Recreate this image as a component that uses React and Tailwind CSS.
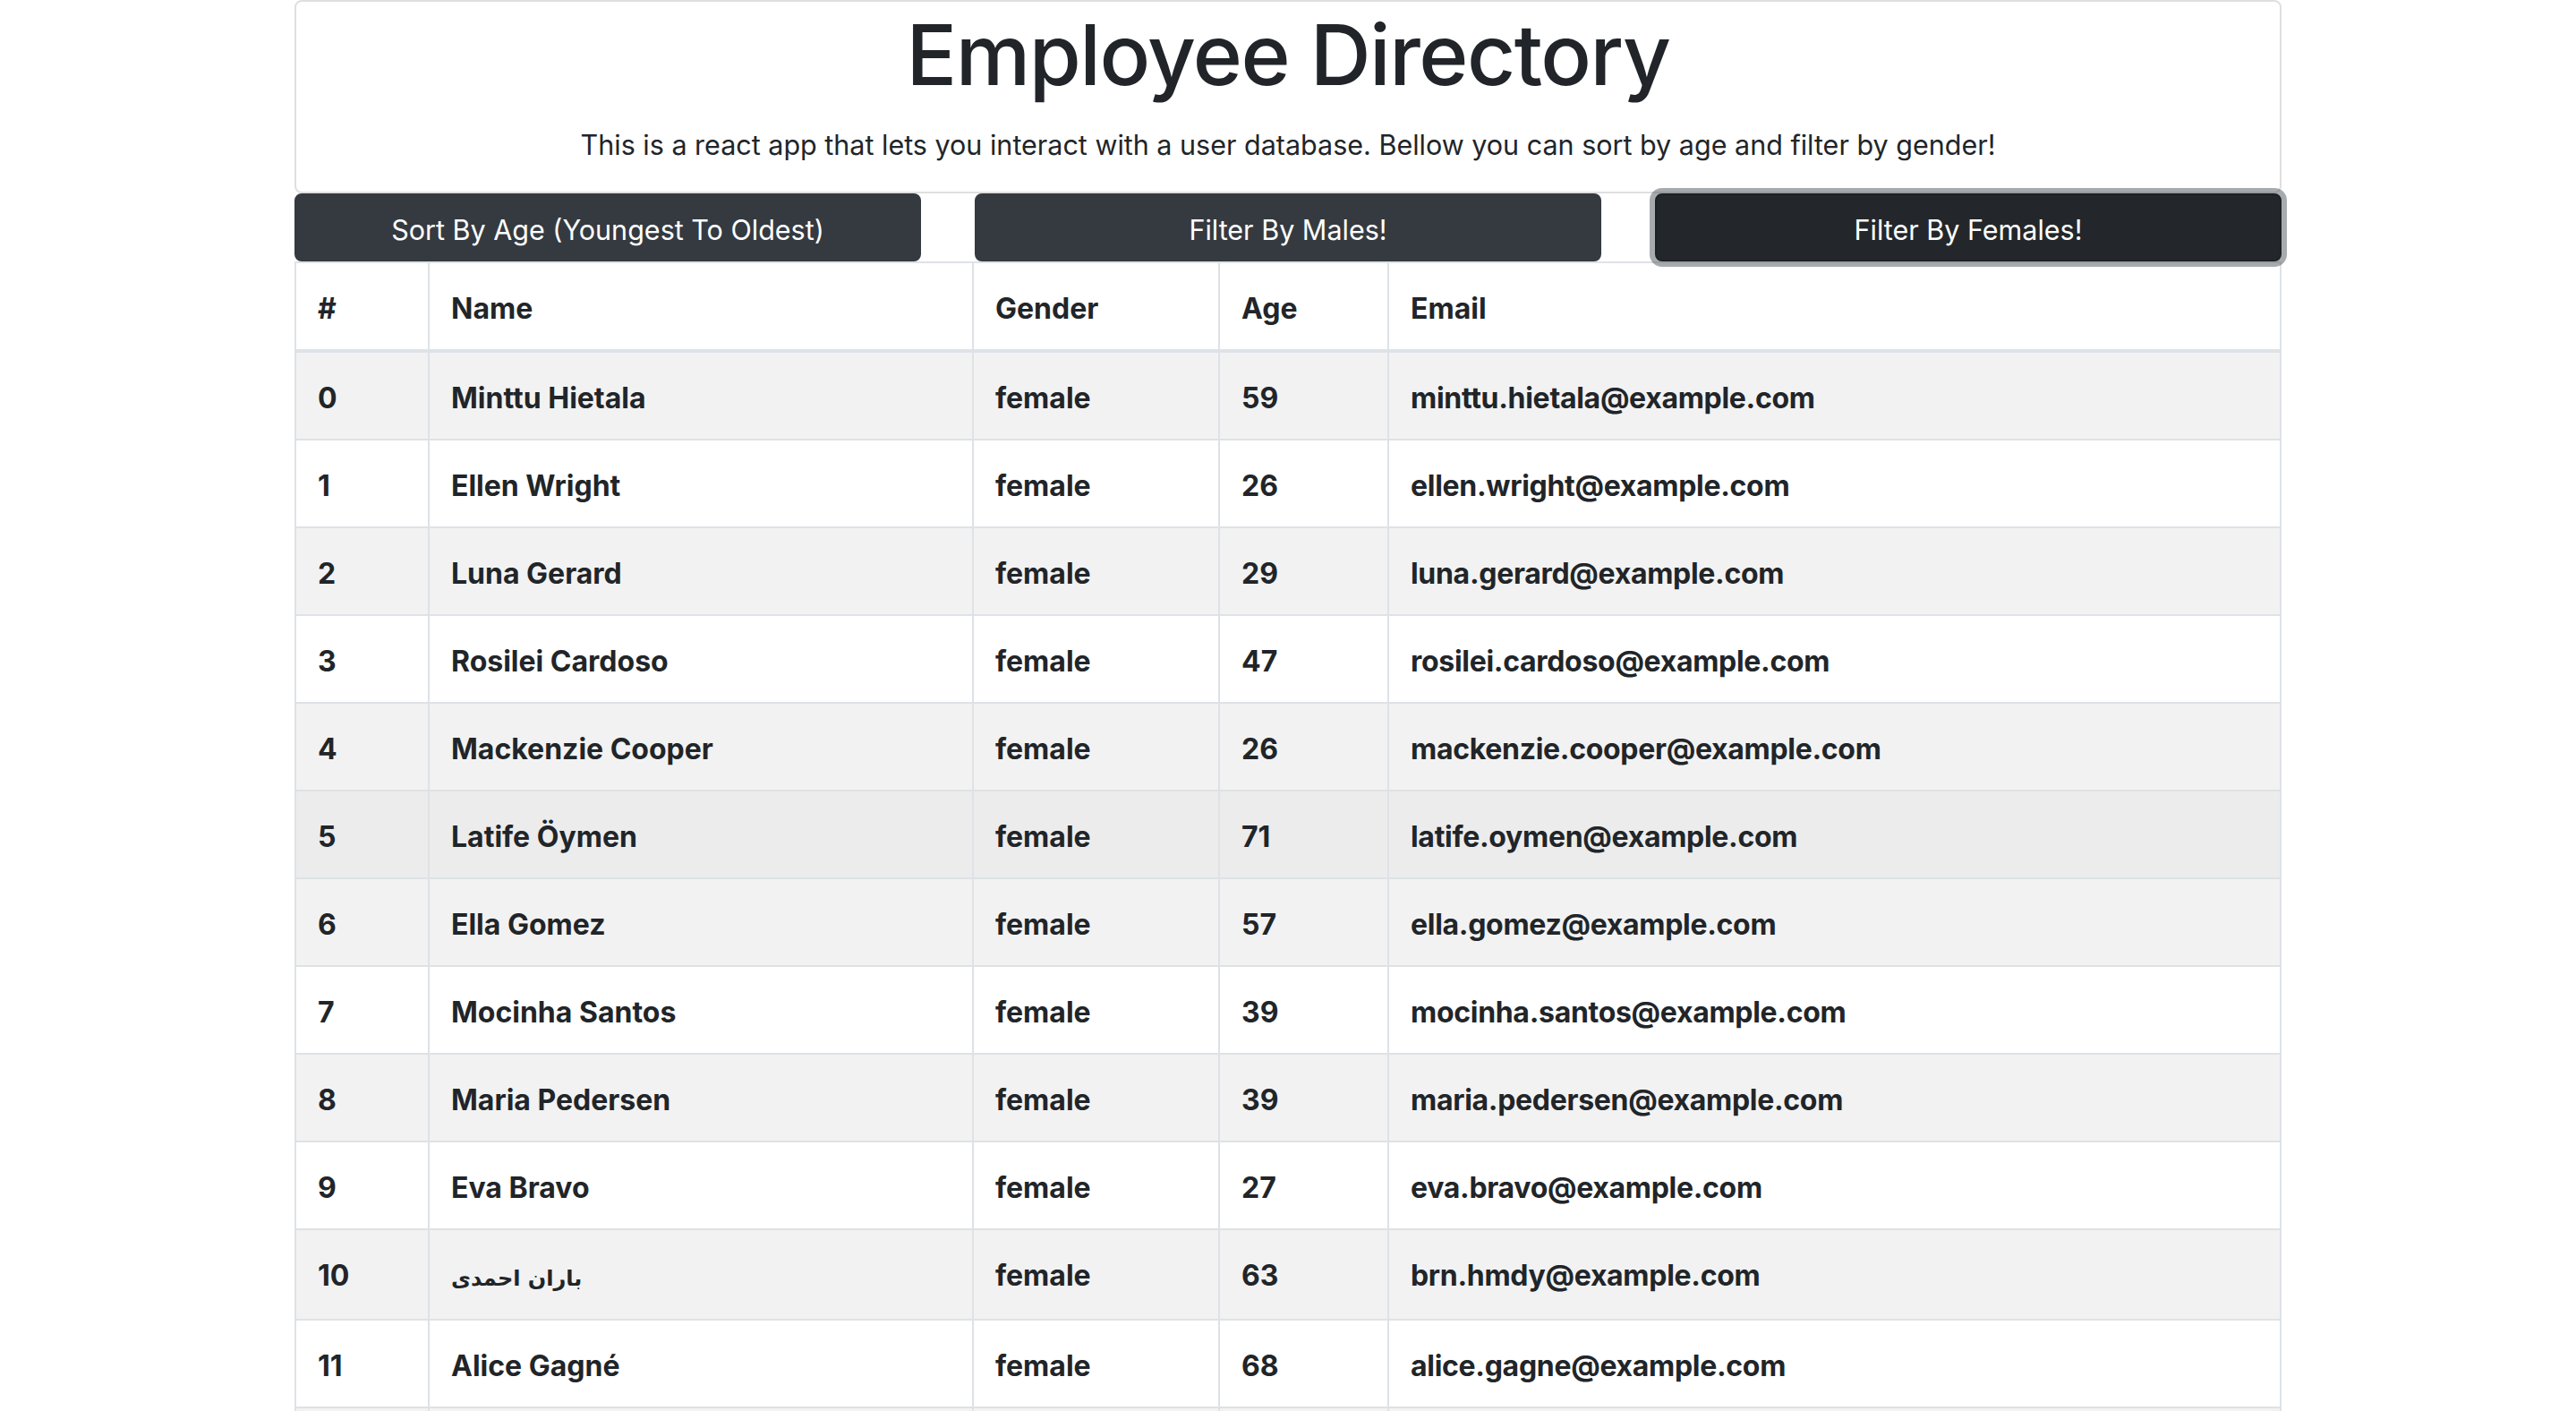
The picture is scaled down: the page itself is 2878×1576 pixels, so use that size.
import React, { useState } from 'react';

const employees = [
  { name: 'Minttu Hietala', gender: 'female', age: 59, email: 'minttu.hietala@example.com' },
  { name: 'Ellen Wright', gender: 'female', age: 26, email: 'ellen.wright@example.com' },
  { name: 'Luna Gerard', gender: 'female', age: 29, email: 'luna.gerard@example.com' },
  { name: 'Rosilei Cardoso', gender: 'female', age: 47, email: 'rosilei.cardoso@example.com' },
  { name: 'Mackenzie Cooper', gender: 'female', age: 26, email: 'mackenzie.cooper@example.com' },
  { name: 'Latife Öymen', gender: 'female', age: 71, email: 'latife.oymen@example.com' },
  { name: 'Ella Gomez', gender: 'female', age: 57, email: 'ella.gomez@example.com' },
  { name: 'Mocinha Santos', gender: 'female', age: 39, email: 'mocinha.santos@example.com' },
  { name: 'Maria Pedersen', gender: 'female', age: 39, email: 'maria.pedersen@example.com' },
  { name: 'Eva Bravo', gender: 'female', age: 27, email: 'eva.bravo@example.com' },
  { name: 'باران احمدی', gender: 'female', age: 63, email: 'brn.hmdy@example.com', rtl: true },
  { name: 'Alice Gagné', gender: 'female', age: 68, email: 'alice.gagne@example.com' },
  { name: 'Nora Lehmann', gender: 'female', age: 44, email: 'nora.lehmann@example.com' },
  { name: 'Sofia Moreno', gender: 'female', age: 35, email: 'sofia.moreno@example.com' },
];

function App() {
  const [active, setActive] = useState('female');
  const [hovered, setHovered] = useState(5);

  const buttons = [
    { key: 'age', label: 'Sort By Age (Youngest To Oldest)' },
    { key: 'male', label: 'Filter By Males!' },
    { key: 'female', label: 'Filter By Females!' },
  ];

  const rowBg = (i) => {
    if (i === hovered) return 'bg-[#ececec]';
    return i % 2 === 0 ? 'bg-[#f2f2f2]' : 'bg-white';
  };

  const cell = 'border-2 border-[#dee2e6] px-[24px] pt-[27px] pb-[21px] leading-[48px] text-left align-top';

  return (
    <div className="min-h-screen bg-white text-[#212529] font-['Inter','Noto_Sans',sans-serif]">
      <div className="w-[2220px] mx-auto">
        {/* Header */}
        <div className="border-2 border-[#dfdfdf] rounded-[8px] pt-[3px] pb-[28px] text-center">
          <h1 className="text-[94px] leading-[112px] font-medium tracking-[-1.5px]">Employee Directory</h1>
          <p className="mt-[21px] text-[30.5px] leading-[48px]">
            This is a react app that lets you interact with a user database. Bellow you can sort by age and filter by gender!
          </p>
        </div>

        {/* Controls */}
        <div className="relative z-10 grid grid-cols-3 gap-[60px]">
          {buttons.map(b => (
            <button
              key={b.key}
              onClick={() => setActive(b.key)}
              className={`h-[76px] pt-[6px] rounded-[8px] border-2 text-white text-[30.5px] leading-[48px] ${
                active === b.key
                  ? 'bg-[#23272b] border-[#1d2124] shadow-[0_0_0_6px_rgba(82,88,93,0.5)]'
                  : 'bg-[#343a40] border-[#343a40]'
              }`}
            >
              {b.label}
            </button>
          ))}
        </div>

        {/* Table */}
        <table className="w-full table-fixed border-collapse text-[32px] font-bold">
          <thead>
            <tr>
              <th className={`${cell} w-[149px] border-b-4`}>#</th>
              <th className={`${cell} w-[608px] border-b-4`}>Name</th>
              <th className={`${cell} w-[275px] border-b-4`}>Gender</th>
              <th className={`${cell} w-[189px] border-b-4`}>Age</th>
              <th className={`${cell} border-b-4`}>Email</th>
            </tr>
          </thead>
          <tbody>
            {employees.map((emp, i) => (
              <tr key={i} className={rowBg(i)} onMouseEnter={() => setHovered(i)}>
                <td className={cell}>{i}</td>
                <td className={cell}>
                  {emp.rtl ? (
                    <span className="text-[24px] font-['DejaVu_Sans',sans-serif]">{emp.name}</span>
                  ) : (
                    emp.name
                  )}
                </td>
                <td className={cell}>{emp.gender}</td>
                <td className={cell}>{emp.age}</td>
                <td className={`${cell} tracking-[-0.3px]`}>{emp.email}</td>
              </tr>
            ))}
          </tbody>
        </table>
      </div>
    </div>
  );
}

export default App;
